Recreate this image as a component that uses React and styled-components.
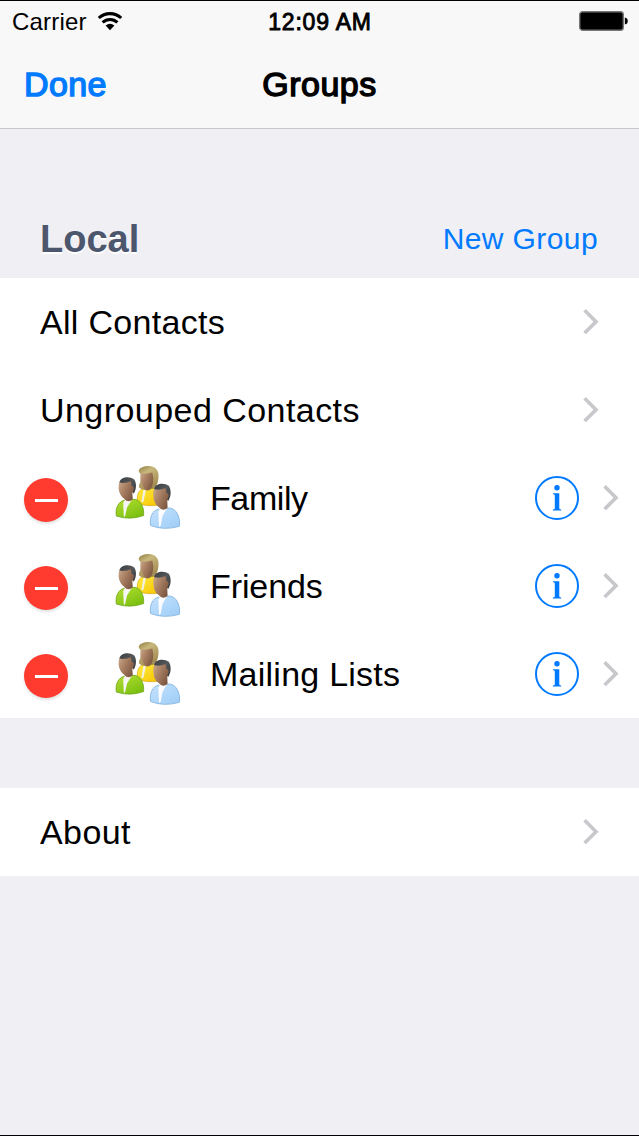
import React from 'react';
import styled, { createGlobalStyle } from 'styled-components';

const GlobalStyle = createGlobalStyle`
    * {
        box-sizing: border-box;
    }
    body {
        margin: 0;
        background-color: #efeff4;
        font-family: "Liberation Sans", Arial, sans-serif;
        color: #000;
    }
`;

const Screen = styled.div`
    display: flex;
    flex-direction: column;
    height: 1136px;
    border-top: 1px solid #050005;
    border-bottom: 1px solid #050008;
    overflow: hidden;
`;

const Header = styled.header`
    height: 128px;
    background-color: #f8f8f8;
    border-bottom: 1px solid #c8c7cc;
`;

const Bar = styled.div`
    display: grid;
    grid-template-columns: 1fr auto 1fr;
    align-items: center;
`;

const StatusBar = styled(Bar)`
    height: 40px;
    padding: 0 11px 0 12px;
    font-size: 24px;
`;

const Carrier = styled.div`
    display: flex;
    align-items: center;
    gap: 10px;
    letter-spacing: 0.2px;
`;

const CarrierName = styled.span`
    padding-top: 2px;
`;

const Clock = styled.span`
    padding-top: 2px;
    font-size: 23px;
    letter-spacing: 0.8px;
    -webkit-text-stroke: 0.9px #000;
`;

const Battery = styled.svg`
    justify-self: end;
`;

const NavBar = styled(Bar)`
    height: 87px;
    padding: 0 24px;
    font-size: 34px;
`;

const NavButton = styled.button`
    all: unset;
    justify-self: start;
    color: #007aff;
    letter-spacing: 0.4px;
    -webkit-text-stroke: 1.4px #007aff;
`;

const Title = styled.h1`
    margin: 0;
    font-size: 34px;
    font-weight: 400;
    letter-spacing: 0.5px;
    -webkit-text-stroke: 1.4px #000;
`;

const SectionHeader = styled.div`
    display: flex;
    justify-content: space-between;
    align-items: center;
    height: 79px;
    margin-top: 70px;
    padding: 0 41px 0 40px;
`;

const SectionTitle = styled.h2`
    margin: 0;
    padding-top: 2px;
    font-size: 38px;
    color: #4c566c;
    text-shadow: 0 2px 0 #fff;
`;

const NewGroup = styled.button`
    all: unset;
    font-size: 30px;
    letter-spacing: 0.4px;
    color: #007aff;
`;

const List = styled.div`
    margin-top: ${(props) => props.$gap || 0}px;
    background-color: #fff;
`;

const Row = styled.div`
    display: flex;
    align-items: center;
    height: 88px;
    padding: ${(props) => (props.$editable ? '0 20px 0 24px' : '0 40px')};
`;

const Label = styled.span`
    flex: 1;
    font-size: 34px;
    letter-spacing: ${(props) => props.$spacing}px;
    white-space: nowrap;
`;

const Remove = styled.span`
    display: flex;
    align-items: center;
    justify-content: center;
    width: 44px;
    height: 44px;
    margin-top: 4px;
    border-radius: 50%;
    background-color: #ff3b30;
    box-shadow: 0 2px 3px rgba(0, 0, 0, 0.12);

    &::before {
        content: "";
        width: 23px;
        height: 3px;
        background-color: #fff;
    }
`;

const GroupArt = styled.svg`
    margin: -2px 20px 0 42px;
`;

const InfoArt = styled.svg`
    margin-right: 24px;
`;

const Arrow = styled.svg`
    margin-top: -1px;
`;

const Chevron = () => (
    <Arrow width="16" height="26" viewBox="0 0 16 26" fill="none">
        <path d="M1.6 1.3L13 12.7L1.6 24.1" stroke="#c7c7cc" strokeWidth="3.6" />
    </Arrow>
);

const Info = () => (
    <InfoArt width="44" height="44" viewBox="0 0 44 44">
        <circle cx="22" cy="22" r="21" fill="none" stroke="#007aff" strokeWidth="2" />
        <circle cx="22" cy="11.8" r="2.7" fill="#007aff" />
        <path d="M18 17.2H24.3V32.4Q24.4 33.4 26.2 33.5V34.5H17.8V33.5Q19.7 33.4 19.8 32.4V19.3Q19.6 18.3 18 18.2Z" fill="#007aff" />
    </InfoArt>
);

const People = () => (
    <GroupArt width="80" height="74" viewBox="0 0 80 74">
        <defs>
            <linearGradient id="skin" x1="0" y1="0" x2="1" y2="0.6">
                <stop offset="0" stopColor="#c9a88e" />
                <stop offset="0.45" stopColor="#a98063" />
                <stop offset="1" stopColor="#7d5841" />
            </linearGradient>
            <linearGradient id="blond" x1="0" y1="0" x2="0.5" y2="1">
                <stop offset="0" stopColor="#8d7c42" />
                <stop offset="0.35" stopColor="#c8b77d" />
                <stop offset="1" stopColor="#a08a50" />
            </linearGradient>
            <linearGradient id="dark" x1="0" y1="0" x2="1" y2="1">
                <stop offset="0" stopColor="#3a3d40" />
                <stop offset="0.5" stopColor="#55585b" />
                <stop offset="1" stopColor="#33363a" />
            </linearGradient>
            <linearGradient id="yellow" x1="0" y1="0" x2="1" y2="1">
                <stop offset="0" stopColor="#ffee45" />
                <stop offset="1" stopColor="#f6c400" />
            </linearGradient>
            <linearGradient id="green" x1="0" y1="0" x2="0.6" y2="1">
                <stop offset="0" stopColor="#b5e034" />
                <stop offset="1" stopColor="#7cc010" />
            </linearGradient>
            <linearGradient id="blue" x1="0" y1="0" x2="1" y2="1">
                <stop offset="0" stopColor="#c6e2fc" />
                <stop offset="1" stopColor="#9dcdf8" />
            </linearGradient>
        </defs>

        <path d="M27.5 43C26.5 34 29 29.5 34 28.5L43 27.5Q47 29 48.5 33V45Q36 47 27.5 43Z" fill="url(#yellow)" stroke="#d9a400" strokeWidth="0.7" />
        <path d="M33.5 30L36 29.5L33.3 42H31.3Z" fill="#f1f1ea" />
        <path d="M28.6 10.5C30.5 6.3 38 4.8 43.5 7C48.8 9.5 49.3 15 48 21C47.2 26 43.5 29.5 39.5 29.5Q32 31 29 27.5Q28.4 25 30.3 22L30.6 14Q28.8 12.5 28.6 10.5Z" fill="url(#blond)" />
        <path d="M30.8 13Q36 14.5 42.3 12.5Q44 18 42.8 23.5L41.5 27.5Q39 31.5 36 30.2Q34.3 29.5 34 27.8Q29.7 24 30.8 13Z" fill="url(#skin)" />

        <path d="M6.3 56C5 47.5 9 41.5 14 40.3L25 39.3C30.5 40.5 34.3 46.5 33.6 55.5Q20 60.5 6.3 56Z" fill="url(#green)" stroke="#6ea519" strokeWidth="0.8" />
        <path d="M13.2 43L15 39.5L22 39.5L17 47.5L15 56.5H13.8Z" fill="#f6f7f4" />
        <path d="M9.3 22.5C10.5 16.6 19.5 15.8 24 19.2C27 22.5 26.4 30 23.8 33.5L17 27Z" fill="url(#dark)" />
        <path d="M9 22.6Q15 24 20.8 21.3L21.8 26Q23.9 26 23.9 28.8Q23.6 31.8 22.3 33L22.8 39.2Q18 43.5 14.3 39Q7 34 9 22.6Z" fill="url(#skin)" />

        <path d="M40.5 65.5C39.3 56.5 43 50.5 48 49.3L60 48C66.5 49.5 70.5 56.5 69.4 66.3Q54 70.8 40.5 65.5Z" fill="url(#blue)" stroke="#7bb0dd" strokeWidth="0.8" />
        <path d="M48.3 52L50 47.8L56.8 48.5L52.5 56L50.5 66.5H49Z" fill="#fafcff" />
        <path d="M44 29C45.2 23 54.5 22.3 58.8 25.8C61.6 30 61.1 37 58.2 41L51 34Z" fill="url(#dark)" />
        <path d="M43.7 29Q49.5 30.8 55.6 28L56.5 33Q58.7 32.8 58.7 35.5Q58.4 38.6 57.2 39.8L57.6 47.8Q53 52 49.2 47.5Q41.7 43 43.7 29Z" fill="url(#skin)" />
    </GroupArt>
);

const GroupRow = ({ name, spacing }) => (
    <Row $editable>
        <Remove />
        <People />
        <Label $spacing={spacing}>{name}</Label>
        <Info />
        <Chevron />
    </Row>
);

const LinkRow = ({ name, spacing }) => (
    <Row>
        <Label $spacing={spacing}>{name}</Label>
        <Chevron />
    </Row>
);

const groups = [
    { name: 'Family', spacing: -0.4 },
    { name: 'Friends', spacing: -0.1 },
    { name: 'Mailing Lists', spacing: 0.25 }
];

const App = () => (
    <>
        <GlobalStyle />
        <Screen>
            <Header>
                <StatusBar>
                    <Carrier>
                        <CarrierName>Carrier</CarrierName>
                        <svg width="26" height="20" viewBox="0 0 26 20" fill="none" stroke="#000" strokeWidth="3.1">
                            <path d="M1.8 7C8 1.1 18 1.1 24.2 7" />
                            <path d="M5.6 11.4C9.8 7.5 16.2 7.5 20.4 11.4" />
                            <path d="M8.6 14.6Q13 11 17.4 14.6L13 19.2Z" fill="#000" stroke="none" />
                        </svg>
                    </Carrier>
                    <Clock>12:09 AM</Clock>
                    <Battery width="49" height="20" viewBox="0 0 49 20">
                        <rect x="0.7" y="0.8" width="43.6" height="18.4" rx="2.8" fill="#000" stroke="#777" strokeWidth="1.4" />
                        <path d="M45.8 6.5Q48.8 7 48.8 10Q48.8 13 45.8 13.5Z" fill="#000" />
                    </Battery>
                </StatusBar>
                <NavBar>
                    <NavButton>Done</NavButton>
                    <Title>Groups</Title>
                </NavBar>
            </Header>

            <SectionHeader>
                <SectionTitle>Local</SectionTitle>
                <NewGroup>New Group</NewGroup>
            </SectionHeader>
            <List>
                <LinkRow name="All Contacts" spacing={0.3} />
                <LinkRow name="Ungrouped Contacts" spacing={0.45} />
                {groups.map((group) => (
                    <GroupRow key={group.name} name={group.name} spacing={group.spacing} />
                ))}
            </List>

            <List $gap={70}>
                <LinkRow name="About" spacing={0.4} />
            </List>
        </Screen>
    </>
);

export default App;
